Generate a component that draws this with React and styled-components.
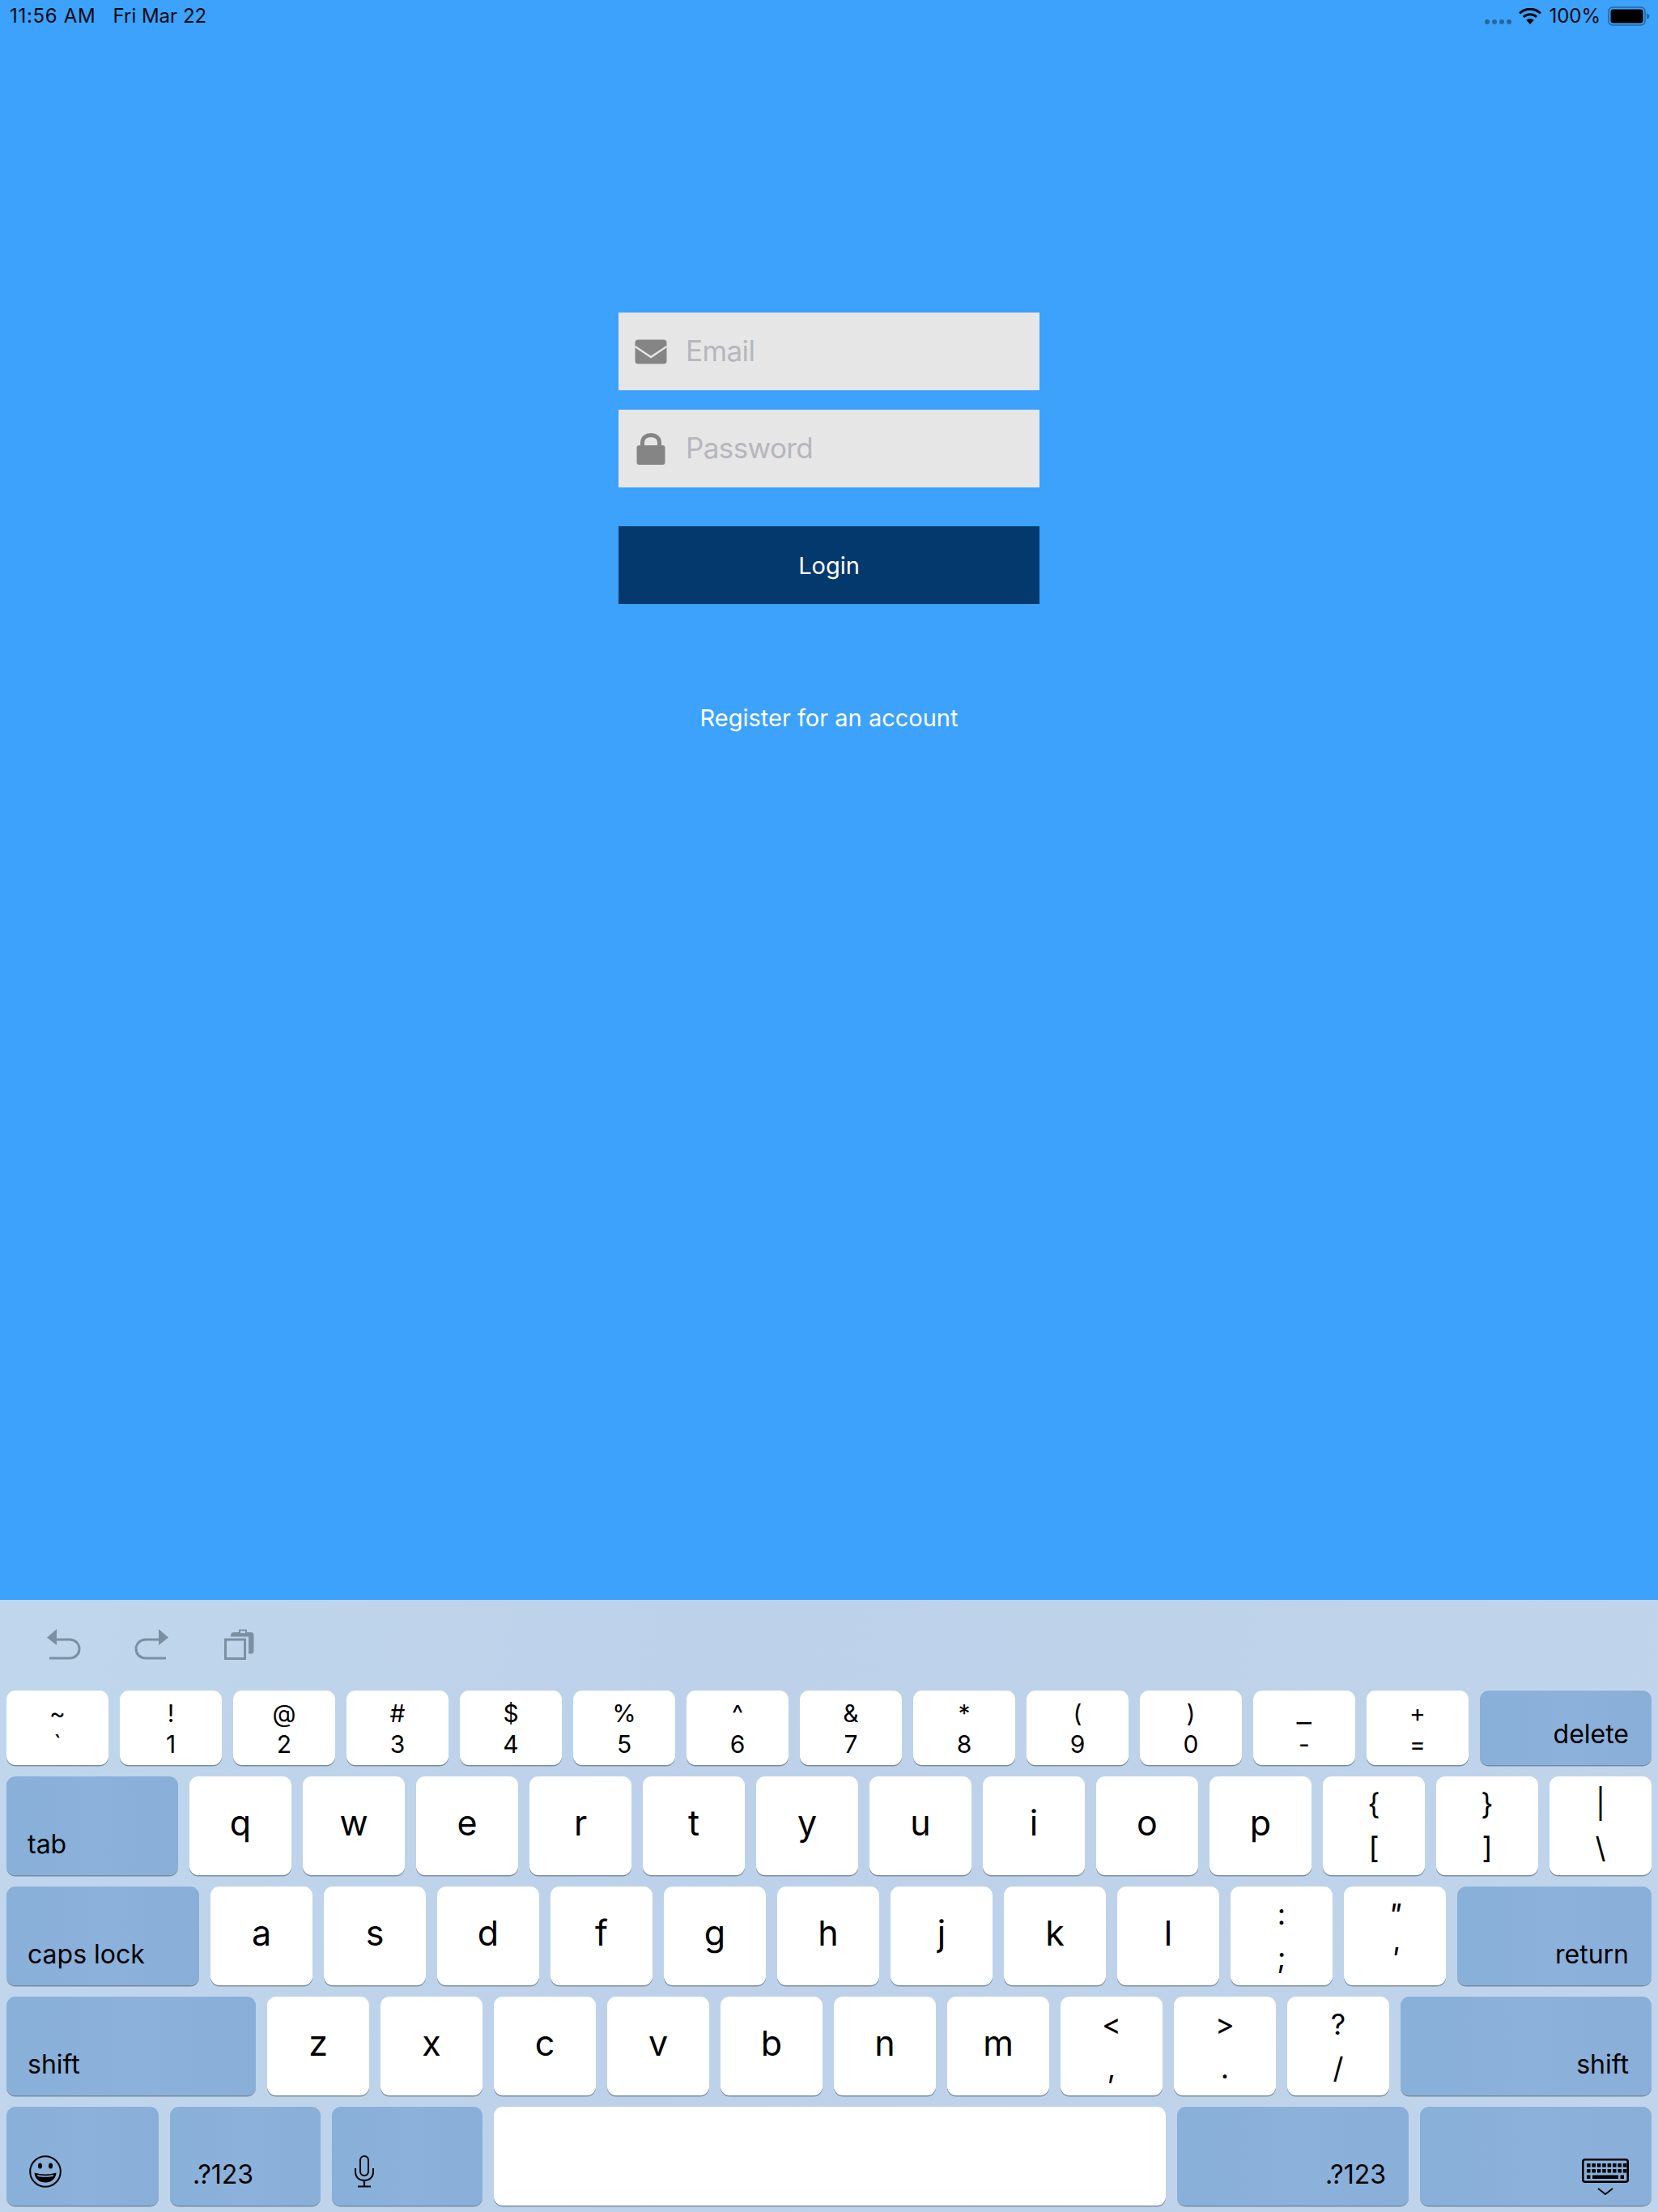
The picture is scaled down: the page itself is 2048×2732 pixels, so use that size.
import React from "react";
import styled, { createGlobalStyle } from "styled-components";

const Global = createGlobalStyle`
  html, body { margin: 0; padding: 0; background: #3ca2fb; }
  * { box-sizing: border-box; }
`;

const Page = styled.div`
  width: 2048px;
  height: 2732px;
  display: flex;
  flex-direction: column;
  background: #3ca2fb;
  font-family: Inter, "Liberation Sans", sans-serif;
  color: #000;
  overflow: hidden;
`;

const StatusBar = styled.div`
  height: 40px;
  padding: 0 10px 0 12px;
  display: flex;
  align-items: center;
  justify-content: space-between;
  font-size: 24px;
  line-height: 40px;
  color: #050a10;
`;
const StatusGroup = styled.div`
  display: flex;
  align-items: center;
  gap: ${(p) => p.$gap}px;
`;
const Clock = styled.span`
  letter-spacing: 0.7px;
`;
const Dots = styled.div`
  display: flex;
  gap: 3px;
  margin-top: 13px;
`;
const Dot = styled.span`
  width: 6px;
  height: 6px;
  border-radius: 50%;
  background: #26669f;
`;

const Main = styled.main`
  flex: 1;
  padding-top: 346px;
  display: flex;
  flex-direction: column;
  align-items: center;
`;
const Field = styled.div`
  width: 520px;
  height: 96px;
  margin-bottom: 24px;
  background: #e6e6e6;
  display: flex;
  align-items: center;
`;
const FieldIcon = styled.div`
  width: 83px;
  display: flex;
  justify-content: center;
  padding-right: 3px;
`;
const Placeholder = styled.span`
  font-size: 35px;
  letter-spacing: -0.6px;
  padding-bottom: 2px;
  color: #b6b6bc;
`;
const LoginButton = styled.div`
  width: 520px;
  height: 96px;
  margin-top: 24px;
  background: #03396c;
  color: #fff;
  font-size: 29px;
  display: flex;
  align-items: center;
  justify-content: center;
`;
const RegisterLink = styled.div`
  margin-top: 121px;
  color: #fff;
  font-size: 29px;
  line-height: 40px;
`;

const Keyboard = styled.section`
  height: 756px;
  padding: 0 8px;
  background: linear-gradient(100deg, #c0d6ec 0%, #bdd2ea 40%, #bed3ea 70%, #c0d5eb 100%);
`;
const Toolbar = styled.div`
  height: 112px;
  padding: 36px 0 0 50px;
  display: flex;
  align-items: flex-start;
  gap: 66px;
`;
const PasteSvg = styled.svg`
  margin-left: 3px;
`;
const Rows = styled.div`
  display: flex;
  flex-direction: column;
  gap: 14px;
`;
const Row = styled.div`
  display: flex;
  gap: 14px;
  height: ${(p) => p.$h}px;
`;
const Key = styled.div`
  flex: ${(p) => (p.$w ? `0 0 ${p.$w}px` : "0 0 126px")};
  border-radius: 11px;
  background: #fff;
  box-shadow: 0 1.5px 0.5px #7b8da3;
  display: flex;
  align-items: center;
  justify-content: center;
  padding-bottom: 9px;
  font-size: 43px;
  color: #000;
`;
const DoubleKey = styled(Key)`
  flex-direction: column;
  padding-bottom: 0;
  padding-top: ${(p) => (p.$small ? 1 : 0)}px;
  font-size: ${(p) => (p.$small ? 30 : 36)}px;
  line-height: ${(p) => (p.$small ? 38 : 54)}px;
`;
const Glyph = styled.span`
  display: block;
  font-style: ${(p) => (p.$slant ? "italic" : "normal")};
  transform: ${(p) => (p.$wide ? "scaleX(1.35)" : "none")};
`;
const ModKey = styled.div`
  flex: 0 0 ${(p) => p.$w}px;
  border-radius: 11px;
  background: linear-gradient(90deg, #88b0d9 0%, #8cb1db 50%, #89afd9 100%);
  box-shadow: 0 1.5px 0.5px #76899f;
  display: flex;
  align-items: flex-end;
  justify-content: ${(p) => (p.$right ? "flex-end" : "flex-start")};
  padding: 0 ${(p) => p.$pad ?? 28}px ${(p) => p.$bottom ?? 18}px ${(p) => p.$pad ?? 26}px;
  font-size: 32px;
  line-height: 40px;
  color: #000;
`;

const Envelope = () => (
  <svg width="40" height="31" viewBox="0 0 40 31">
    <rect x="0.5" y="0.5" width="39" height="30" rx="4" fill="#858585" />
    <path d="M0.5 9 L20 22 L39.5 9" fill="none" stroke="#e6e6e6" strokeWidth="2.4" />
  </svg>
);
const Lock = () => (
  <svg width="36" height="39" viewBox="0 0 36 39">
    <rect x="0.5" y="15" width="35" height="24" rx="3" fill="#858585" />
    <path d="M7.5 17 V12 C7.5 5.5 12 2.5 18 2.5 C24 2.5 28.5 5.5 28.5 12 V17" fill="none" stroke="#858585" strokeWidth="5" />
  </svg>
);
const Wifi = () => (
  <svg width="28" height="20" viewBox="0 0 28 20">
    <path d="M1 6.5 C8.5 -0.6 19.5 -0.6 27 6.5" fill="none" stroke="#050a10" strokeWidth="3" />
    <path d="M5.8 11 C10.6 6.6 17.4 6.6 22.2 11" fill="none" stroke="#050a10" strokeWidth="3" />
    <path d="M14 20 L9.2 14.8 C12 12.5 16 12.5 18.8 14.8 Z" fill="#050a10" />
  </svg>
);
const Battery = () => (
  <svg width="52" height="24" viewBox="0 0 52 24">
    <rect x="1" y="1" width="45" height="22" rx="5" fill="none" stroke="#26669f" strokeWidth="1.6" />
    <rect x="3.5" y="3.5" width="40" height="17" rx="3" fill="#000" />
    <path d="M48 8.5 C50.5 9 51.5 10.5 51.5 12 C51.5 13.5 50.5 15 48 15.5 Z" fill="#26669f" />
  </svg>
);
const TOOL = "#7d8fa2";
const Undo = ({ flip }) => (
  <svg width="42" height="38" viewBox="0 0 42 38" style={flip ? { transform: "scaleX(-1)" } : undefined}>
    <path d="M3 36 H28 C35 36 40 31 40 24.500 C40 18 35 13 28 13 H11" fill="none" stroke={TOOL} strokeWidth="3" />
    <path d="M0 10.500 L12 0 V20 Z" fill={TOOL} />
  </svg>
);
const Paste = () => (
  <PasteSvg width="37" height="38" viewBox="0 0 37 38">
    <path d="M8 9.500 V8 C8 5.500 9.500 4 12 4 H18 V0.500 H28 V4 H33 C35.500 4 36.500 5.500 36.500 8 V28 C36.500 29.500 35.500 30.500 34 30.500 H30 V9.500 Z" fill={TOOL} />
    <rect x="20" y="2.200" width="6" height="2.800" fill="#bed3ea" />
    <rect x="1.500" y="13" width="24" height="23.500" fill="none" stroke={TOOL} strokeWidth="3" />
  </PasteSvg>
);
const Emoji = () => (
  <svg width="40" height="40" viewBox="0 0 40 40">
    <circle cx="20" cy="20" r="18.800" fill="none" stroke="#000" strokeWidth="2" />
    <ellipse cx="13.500" cy="13" rx="2.500" ry="3.500" />
    <ellipse cx="26.500" cy="13" rx="2.500" ry="3.500" />
    <path d="M6.500 21.500 C15 24 25 24 33.500 21.500 C33 29 27.500 33.500 20 33.500 C12.500 33.500 7 29 6.500 21.500 Z" />
    <path d="M10 24 C16 25.500 24 25.500 30 24 L29.500 26 C24 27 16 27 10.500 26 Z" fill="#8bb0d9" />
  </svg>
);
const Mic = () => (
  <svg width="24" height="40" viewBox="0 0 24 40">
    <rect x="7" y="1" width="10" height="24" rx="5" fill="none" stroke="#000" strokeWidth="2" />
    <path d="M1 16 V20 C1 27 5.500 31 12 31 C18.500 31 23 27 23 20 V16" fill="none" stroke="#000" strokeWidth="2" />
    <path d="M12 31 V38.500 M4 38.500 H20" fill="none" stroke="#000" strokeWidth="2.200" />
  </svg>
);
const KeyboardGlyph = () => (
  <svg width="58" height="46" viewBox="0 0 58 46">
    <rect x="1.300" y="1.300" width="55.400" height="27.400" rx="2.500" fill="none" stroke="#000" strokeWidth="2.600" />
    {[0, 1, 2, 3, 4, 5, 6, 7].map((i) => (
      <rect key={`a${i}`} x={6 + i * 6.400} y="6" width="4.500" height="4.500" />
    ))}
    {[0, 1, 2, 3, 4, 5, 6, 7].map((i) => (
      <rect key={`b${i}`} x={6 + i * 6.400} y="13" width="4.500" height="4.500" />
    ))}
    <rect x="6" y="20.500" width="4.500" height="4.500" />
    <rect x="13" y="20.500" width="32" height="4.500" />
    <rect x="47.500" y="20.500" width="4.500" height="4.500" />
    <path d="M20 37 L29 44 L38 37" fill="none" stroke="#000" strokeWidth="1.800" />
  </svg>
);

const numberRow = [["~", "`"], ["!", "1"], ["@", "2"], ["#", "3"], ["$", "4"], ["%", "5"], ["^", "6"], ["&", "7"], ["*", "8"], ["(", "9"], [")", "0"], ["_", "-"], ["+", "="]];

const Double = ({ top, bottom, small, slant }) => (
  <DoubleKey $small={small}>
    <Glyph $slant={slant} $wide={top === "_"}>{top}</Glyph>
    <Glyph $slant={slant}>{bottom}</Glyph>
  </DoubleKey>
);

export default function App() {
  return (
    <Page>
      <Global />
      <StatusBar>
        <StatusGroup $gap={21}>
          <Clock>11:56 AM</Clock>
          <span>Fri Mar 22</span>
        </StatusGroup>
        <StatusGroup $gap={9}>
          <Dots>
            <Dot /><Dot /><Dot /><Dot />
          </Dots>
          <Wifi />
          <span>100%</span>
          <Battery />
        </StatusGroup>
      </StatusBar>

      <Main>
        <Field>
          <FieldIcon><Envelope /></FieldIcon>
          <Placeholder>Email</Placeholder>
        </Field>
        <Field>
          <FieldIcon><Lock /></FieldIcon>
          <Placeholder>Password</Placeholder>
        </Field>
        <LoginButton>Login</LoginButton>
        <RegisterLink>Register for an account</RegisterLink>
      </Main>

      <Keyboard>
        <Toolbar>
          <Undo />
          <Undo flip />
          <Paste />
        </Toolbar>
        <Rows>
          <Row $h={92}>
            {numberRow.map(([t, b]) => <Double key={t} top={t} bottom={b} small />)}
            <ModKey $w={212} $right>delete</ModKey>
          </Row>
          <Row $h={122}>
            <ModKey $w={212}>tab</ModKey>
            {"qwertyuiop".split("").map((c) => <Key key={c}>{c}</Key>)}
            <Double top="{" bottom="[" />
            <Double top="}" bottom="]" />
            <Double top="|" bottom="\" />
          </Row>
          <Row $h={122}>
            <ModKey $w={238}>caps lock</ModKey>
            {"asdfghjkl".split("").map((c) => <Key key={c}>{c}</Key>)}
            <Double top=":" bottom=";" />
            <Double top={'"'} bottom="'" slant />
            <ModKey $w={240} $right>return</ModKey>
          </Row>
          <Row $h={122}>
            <ModKey $w={308}>shift</ModKey>
            {"zxcvbnm".split("").map((c) => <Key key={c}>{c}</Key>)}
            <Double top="<" bottom="," />
            <Double top=">" bottom="." />
            <Double top="?" bottom="/" />
            <ModKey $w={310} $right>shift</ModKey>
          </Row>
          <Row $h={122}>
            <ModKey $w={188} $pad={28} $bottom={22}><Emoji /></ModKey>
            <ModKey $w={186} $pad={28}>.?123</ModKey>
            <ModKey $w={186} $pad={28} $bottom={22}><Mic /></ModKey>
            <Key $w={830} />
            <ModKey $w={286} $right>.?123</ModKey>
            <ModKey $w={286} $right $pad={28} $bottom={12}><KeyboardGlyph /></ModKey>
          </Row>
        </Rows>
      </Keyboard>
    </Page>
  );
}
